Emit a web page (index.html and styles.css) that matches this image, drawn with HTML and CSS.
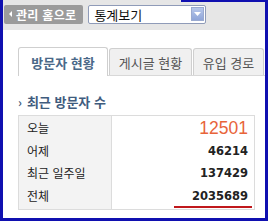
FILE: index.html
```html
<!DOCTYPE html>
<html lang="ko">
<head>
<meta charset="utf-8">
<link rel="stylesheet" href="styles.css">
</head>
<body>
<div class="frame">
  <div class="topbar">
    <a class="back-btn"><span class="tri"></span>관리 홈으로</a>
    <div class="select">
      <span class="select-text">통계보기</span>
      <span class="select-arrow"><svg width="7" height="4" viewBox="0 0 7 4"><path d="M0 0h7L3.5 4z" fill="#fff"/></svg></span>
    </div>
  </div>
  <div class="content">
    <div class="tabs">
      <div class="tab active">방문자 현황</div>
      <div class="tab tab-posts">게시글 현황</div>
      <div class="tab tab-inflow">유입 경로</div>
    </div>
    <div class="section-title"><span class="chev">›</span>최근 방문자 수</div>
    <div class="stats">
      <div class="labels">
        <div class="row">오늘</div>
        <div class="row">어제</div>
        <div class="row">최근 일주일</div>
        <div class="row">전체</div>
      </div>
      <div class="values">
        <div class="row today">12501</div>
        <div class="row">46214</div>
        <div class="row">137429</div>
        <div class="row total"><span>2035689</span></div>
      </div>
    </div>
  </div>
</div>
</body>
</html>
```
FILE: styles.css
```css
html, body {
  margin: 0;
  padding: 0;
  width: 270px;
  height: 222px;
  overflow: hidden;
  background: #fff;
  font-family: "Noto Sans CJK KR", "Noto Sans", sans-serif;
}
.frame {
  position: relative;
  box-sizing: border-box;
  width: 268px;
  height: 221px;
  border: 3px solid #1010b0;
  border-top: 0;
  display: flex;
  flex-direction: column;
}
.frame::before {
  content: "";
  position: absolute;
  top: 0;
  left: 178px;
  right: -3px;
  height: 2px;
  background: #1010b0;
}
.topbar {
  height: 30px;
  background: #e6e6e6;
  display: flex;
  align-items: center;
  padding: 0 0 2px 1px;
  gap: 5px;
  box-sizing: border-box;
}
.back-btn {
  display: flex;
  align-items: center;
  height: 19px;
  padding: 0 7px 0 5px;
  background: #9b9b9b;
  border-radius: 2px;
  color: #fff;
  font-weight: bold;
  font-size: 12px;
  letter-spacing: 0.3px;
}
.tri {
  width: 0;
  height: 0;
  border-top: 3px solid transparent;
  border-bottom: 3px solid transparent;
  border-right: 3px solid #fff;
  margin-right: 4px;
}
.select {
  width: 118px;
  height: 19px;
  box-sizing: border-box;
  background: #fff;
  border: 1px solid #8f9bb8;
  border-radius: 2px;
  display: flex;
  align-items: center;
  justify-content: space-between;
  padding: 0 1px 0 5px;
}
.select-text {
  font-size: 13px;
  color: #111;
}
.select-arrow {
  width: 13px;
  height: 14px;
  background: linear-gradient(#b7c7ea, #8fa5d8);
  border: 1px solid #9aaad0;
  box-sizing: border-box;
  display: flex;
  align-items: center;
  justify-content: center;
}
.content {
  flex: 1;
  padding: 17px 0 0 15px;
}
.tabs {
  display: flex;
  align-items: flex-end;
  border-bottom: 1px solid #d8d8d8;
  height: 28px;
}
.tab {
  flex-shrink: 0;
  white-space: nowrap;
  height: 27px;
  box-sizing: border-box;
  border: 1px solid #cfcfcf;
  border-bottom: 0;
  border-radius: 3px 3px 0 0;
  background: #f0f0f0;
  color: #555;
  font-size: 13px;
  display: flex;
  align-items: center;
  justify-content: center;
  margin-right: 1px;
}
.tab.active {
  width: 90px;
  height: 29px;
  background: #fff;
  color: #4a6888;
  font-weight: bold;
  margin-bottom: -1px;
}
.tab-posts {
  width: 83px;
}
.tab-inflow {
  width: 71px;
}
.section-title {
  margin-top: 16px;
  font-size: 13px;
  font-weight: bold;
  color: #3f5c7e;
  display: flex;
  align-items: center;
}
.chev {
  font-size: 12px;
  margin-right: 5px;
  color: #3f5c7e;
}
.stats {
  margin-top: 4px;
  width: 235px;
  display: flex;
  border: 1px solid #dcdcdc;
}
.labels {
  width: 93px;
  background: #f3f3f3;
  border-right: 1px solid #dcdcdc;
  padding: 1px 0 2px 8px;
  box-sizing: border-box;
}
.values {
  flex: 1;
  padding: 1px 2px 2px 0;
  text-align: right;
}
.row {
  height: 22.5px;
  line-height: 22px;
  font-size: 12px;
  color: #222;
}
.values .row {
  font-family: "DejaVu Sans", Verdana, sans-serif;
  font-weight: bold;
  font-size: 11.5px;
  padding-right: 4px;
}
.values .today {
  font-family: "Liberation Sans", Arial, sans-serif;
  color: #e8643a;
  font-weight: normal;
  font-size: 17.5px;
}
.values .total {
  padding-right: 0;
}
.total span {
  display: inline-block;
  line-height: 20px;
  border-bottom: 2px solid #c0181c;
  padding: 0 4px 0 18px;
}
```
